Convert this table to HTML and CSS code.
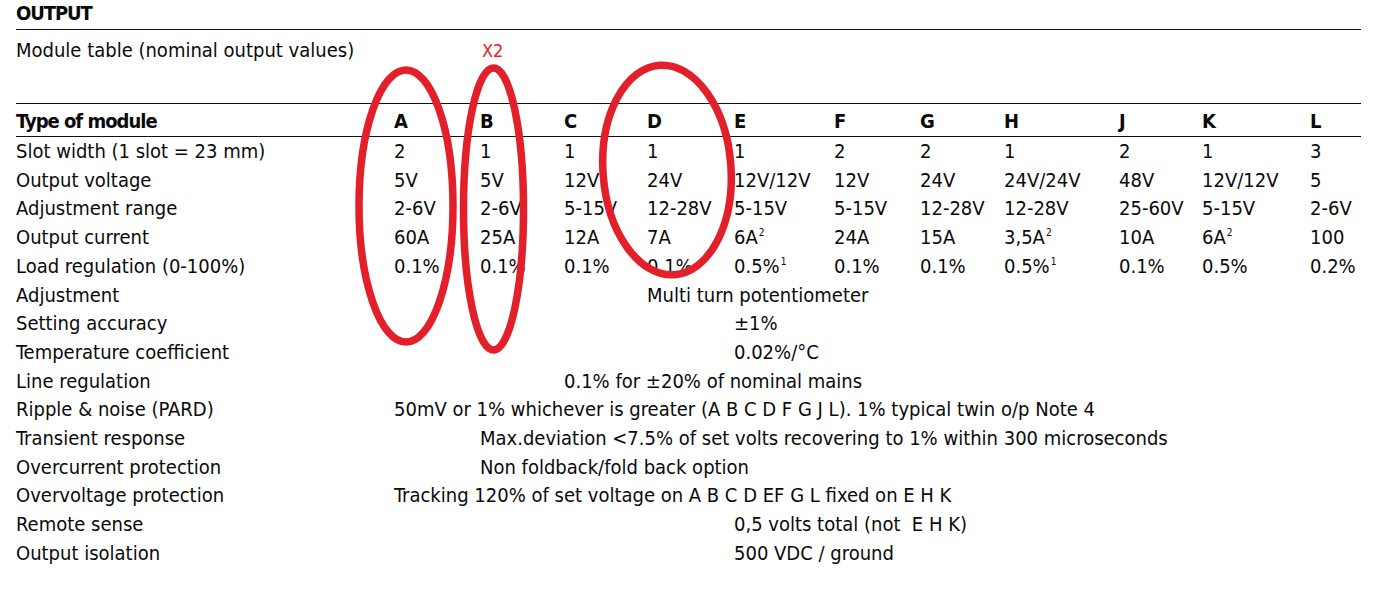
FILE: index.html
```html
<!DOCTYPE html>
<html lang="en">
<head>
<meta charset="utf-8">
<title>Output – module table</title>
<link rel="stylesheet" href="styles.css">
</head>
<body>
<div class="page">
  <div class="title">OUTPUT</div>
  <div class="subtitle">Module table (nominal output values)</div>

  <div class="row head">
    <div class="label">Type of module</div>
    <div>A</div><div>B</div><div>C</div><div>D</div><div>E</div><div>F</div><div>G</div><div>H</div><div>J</div><div>K</div><div>L</div>
  </div>

  <div class="row first">
    <div class="label">Slot width (1 slot = 23 mm)</div>
    <div>2</div><div>1</div><div>1</div><div>1</div><div>1</div><div>2</div><div>2</div><div>1</div><div>2</div><div>1</div><div>3</div>
  </div>
  <div class="row">
    <div class="label">Output voltage</div>
    <div>5V</div><div>5V</div><div>12V</div><div>24V</div><div>12V/12V</div><div>12V</div><div>24V</div><div>24V/24V</div><div>48V</div><div>12V/12V</div><div>5</div>
  </div>
  <div class="row">
    <div class="label">Adjustment range</div>
    <div>2-6V</div><div>2-6V</div><div>5-15V</div><div>12-28V</div><div>5-15V</div><div>5-15V</div><div>12-28V</div><div>12-28V</div><div>25-60V</div><div>5-15V</div><div>2-6V</div>
  </div>
  <div class="row">
    <div class="label">Output current</div>
    <div>60A</div><div>25A</div><div>12A</div><div>7A</div><div>6A<sup>2</sup></div><div>24A</div><div>15A</div><div>3,5A<sup>2</sup></div><div>10A</div><div>6A<sup>2</sup></div><div>100</div>
  </div>
  <div class="row">
    <div class="label">Load regulation (0-100%)</div>
    <div>0.1%</div><div>0.1%</div><div>0.1%</div><div>0.1%</div><div>0.5%<sup>1</sup></div><div>0.1%</div><div>0.1%</div><div>0.5%<sup>1</sup></div><div>0.1%</div><div>0.5%</div><div>0.2%</div>
  </div>
  <div class="row">
    <div class="label">Adjustment</div>
    <div class="from-d">Multi turn potentiometer</div>
  </div>
  <div class="row">
    <div class="label">Setting accuracy</div>
    <div class="from-e">±1%</div>
  </div>
  <div class="row">
    <div class="label">Temperature coefficient</div>
    <div class="from-e">0.02%/°C</div>
  </div>
  <div class="row">
    <div class="label">Line regulation</div>
    <div class="from-c">0.1% for ±20% of nominal mains</div>
  </div>
  <div class="row">
    <div class="label">Ripple &amp; noise (PARD)</div>
    <div class="from-a">50mV or 1% whichever is greater (A B C D F G J L). 1% typical twin o/p Note 4</div>
  </div>
  <div class="row">
    <div class="label">Transient response</div>
    <div class="from-b">Max.deviation &lt;7.5% of set volts recovering to 1% within 300 microseconds</div>
  </div>
  <div class="row">
    <div class="label">Overcurrent protection</div>
    <div class="from-b">Non foldback/fold back option</div>
  </div>
  <div class="row">
    <div class="label">Overvoltage protection</div>
    <div class="from-a">Tracking 120% of set voltage on A B C D EF G L fixed on E H K</div>
  </div>
  <div class="row">
    <div class="label">Remote sense</div>
    <div class="from-e">0,5 volts total (not&nbsp; E H K)</div>
  </div>
  <div class="row">
    <div class="label">Output isolation</div>
    <div class="from-e">500 VDC / ground</div>
  </div>
</div>

<div class="note">X2</div>
<svg class="marks" width="1394" height="592" viewBox="0 0 1394 592" aria-hidden="true">
  <ellipse cx="406" cy="206" rx="47" ry="136" />
  <ellipse cx="493.5" cy="209" rx="30" ry="141" />
  <ellipse cx="667" cy="170" rx="64" ry="105" transform="rotate(-4 667 170)" />
</svg>
</body>
</html>
```

FILE: styles.css
```css
html, body {
  margin: 0;
  padding: 0;
  background: #ffffff;
}

body {
  position: relative;
  width: 1394px;
  height: 592px;
  overflow: hidden;
  font-family: "DejaVu Sans Condensed", "DejaVu Sans", sans-serif;
  font-stretch: condensed;
  font-size: 20px;
  color: #0a0a0a;
}

.page {
  margin-left: 16px;
  width: 1345px;
}

.title {
  height: 30px;
  box-sizing: border-box;
  line-height: 27px;
  border-bottom: 1px solid #111;
  font-weight: bold;
  font-size: 20px;
  letter-spacing: -1.1px;
}

.subtitle {
  height: 73px;
  padding-top: 6px;
  line-height: 28px;
  box-sizing: border-box;
}

.row {
  display: grid;
  grid-template-columns: 378px 86px 84px 83px 87px 100px 86px 84px 115px 83px 108px 51px;
  line-height: 28.7px;
  white-space: nowrap;
}

.head {
  border-top: 1px solid #111;
  border-bottom: 1px solid #111;
  height: 34px;
  box-sizing: border-box;
  padding-top: 3px;
  line-height: 28px;
  font-weight: bold;
}

.head .label {
  letter-spacing: -1px;
}

.row sup {
  font-size: 10px;
  line-height: 0;
  vertical-align: 8px;
  margin-left: 1px;
}

.from-a { grid-column: 2 / -1; }
.from-b { grid-column: 3 / -1; }
.from-c { grid-column: 4 / -1; }
.from-d { grid-column: 5 / -1; }
.from-e { grid-column: 6 / -1; }

.note {
  position: absolute;
  left: 482px;
  top: 41px;
  font-family: "DejaVu Sans Condensed", "DejaVu Sans", sans-serif;
  font-stretch: condensed;
  font-size: 18px;
  line-height: 20px;
  color: #e0262d;
}

.marks {
  position: absolute;
  left: 0;
  top: 0;
  pointer-events: none;
}

.marks ellipse {
  fill: none;
  stroke: #e3202a;
  stroke-width: 7.5;
}
```
